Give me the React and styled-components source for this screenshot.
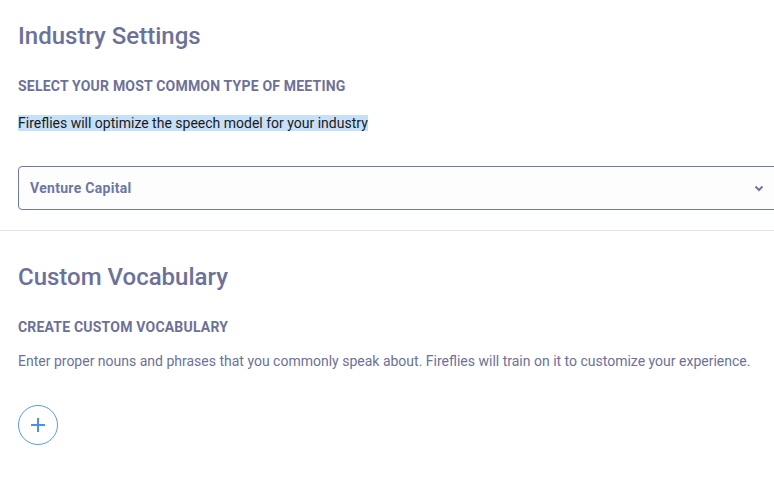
import React from "react";
import styled, { createGlobalStyle } from "styled-components";

const GlobalStyle = createGlobalStyle`
  body {
    margin: 0;
    background: #ffffff;
    font-family: Roboto, "Liberation Sans", sans-serif;
    overflow: hidden;
  }
`;

const Page = styled.div`
  width: 774px;
  overflow: hidden;
`;

const Section = styled.section`
  display: flex;
  flex-direction: column;
  align-items: flex-start;
  padding: ${(p) => p.$pad || "0 0 0 18px"};
  border-bottom: ${(p) => (p.$divider ? "1px solid #e6e6e6" : "none")};
`;

const Title = styled.h2`
  margin: 0 0 ${(p) => p.$gap || 0}px;
  font-size: 24px;
  font-weight: 500;
  line-height: 30px;
  color: #6c7199;
`;

const Label = styled.h4`
  margin: 0 0 ${(p) => p.$gap || 0}px;
  font-size: 14px;
  font-weight: 700;
  line-height: 16px;
  color: #6c7199;
  letter-spacing: 0.2px;
`;

const Text = styled.p`
  margin: 0 0 ${(p) => p.$gap || 0}px;
  font-size: 14px;
  line-height: 16px;
  color: #6c7199;
`;

const Highlight = styled.span`
  background: #c7e0f9;
  color: #1a1a1a;
`;

const Select = styled.div`
  display: flex;
  align-items: center;
  justify-content: space-between;
  width: 780px;
  height: 44px;
  box-sizing: border-box;
  padding: 0 33px 0 11px;
  border: 1px solid #6f79aa;
  border-radius: 4px;
  background: #fdfdfd;
  font-size: 14px;
  font-weight: 700;
  letter-spacing: 0.3px;
  color: #6c77a6;
`;

const AddButton = styled.button`
  display: flex;
  align-items: center;
  justify-content: center;
  width: 40px;
  height: 40px;
  padding: 0;
  border: 1px solid #5a98ee;
  border-radius: 50%;
  background: #ffffff;
  cursor: pointer;
`;

const Chevron = () => (
  <svg width="10" height="7" viewBox="0 0 10 7">
    <path d="M1.5 1.5 L5 5 L8.5 1.5" fill="none" stroke="#6c77a6" strokeWidth="2" />
  </svg>
);

const Plus = () => (
  <svg width="16" height="16" viewBox="0 0 16 16">
    <path d="M8 1 V15 M1 8 H15" stroke="#4a8ef0" strokeWidth="2" />
  </svg>
);

export default function App() {
  return (
    <Page>
      <GlobalStyle />
      <Section $divider $pad="21px 0 20px 18px">
        <Title $gap={27}>Industry Settings</Title>
        <Label $gap={21}>SELECT YOUR MOST COMMON TYPE OF MEETING</Label>
        <Text $gap={35}>
          <Highlight>Fireflies will optimize the speech model for your industry</Highlight>
        </Text>
        <Select>
          <span>Venture Capital</span>
          <Chevron />
        </Select>
      </Section>
      <Section $pad="31px 0 30px 18px">
        <Title $gap={27}>Custom Vocabulary</Title>
        <Label $gap={18}>CREATE CUSTOM VOCABULARY</Label>
        <Text $gap={36}>
          Enter proper nouns and phrases that you commonly speak about. Fireflies will train on it to customize your experience.
        </Text>
        <AddButton>
          <Plus />
        </AddButton>
      </Section>
    </Page>
  );
}
